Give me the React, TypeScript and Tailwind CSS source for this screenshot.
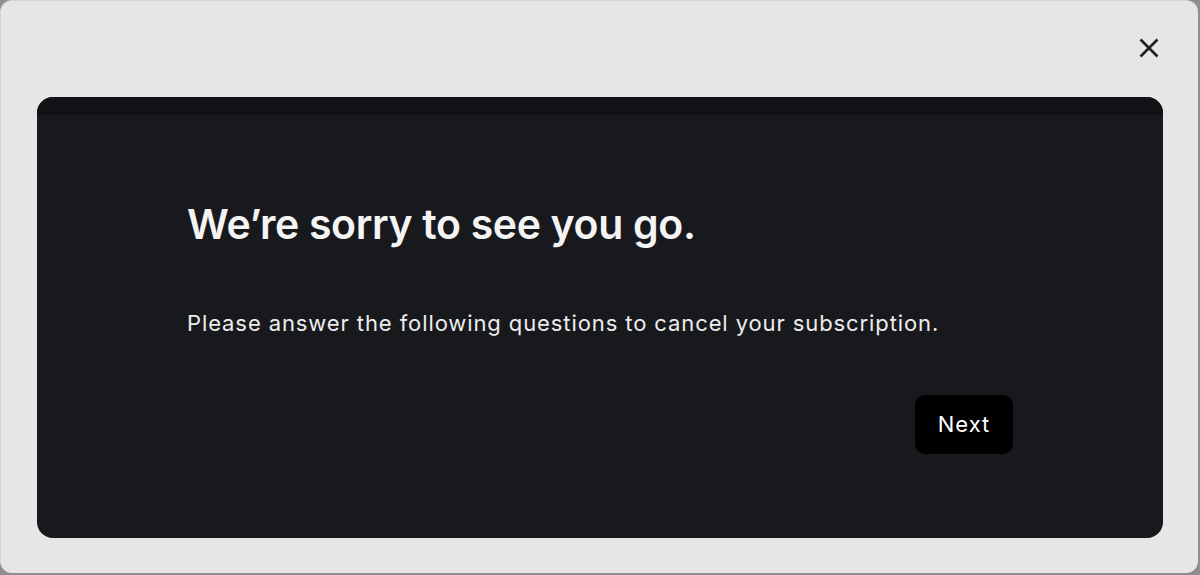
export default function App() {
  return (
    <div className="h-[575px] w-[1200px] bg-[#8e8e8e] font-['Inter',sans-serif]">
      <div className="flex h-[573px] w-[1198px] flex-col rounded-[12px] border-l border-t border-[#d4d4d4] bg-[#e6e6e6]">
        {/* Top bar with close */}
        <div className="flex h-[96px] items-start justify-end pr-[39px] pt-[37px]">
          <button className="text-[#1f1f1f]">
            <svg width="20" height="20" viewBox="0 0 20 20" fill="none" stroke="currentColor" strokeWidth="2.6" strokeLinecap="butt">
              <path d="M1.5 1.5L18.5 18.5M18.5 1.5L1.5 18.5" />
            </svg>
          </button>
        </div>

        {/* Dark panel */}
        <div className="ml-[36px] mr-[35px] flex h-[441px] flex-col overflow-hidden rounded-[16px] bg-[#18191d]">
          <div className="h-[18px] bg-[#111215]" />
          <div className="flex flex-col px-[150px] pt-[85px]">
            <h1 className="text-[41px] font-semibold leading-[48px] tracking-[-0.35px] text-[#f4f4f4]">
              We’re sorry to see you go.
            </h1>
            <p className="mt-[60px] text-[22px] leading-[30px] tracking-[0.9px] text-[#ededed]">
              Please answer the following questions to cancel your subscription.
            </p>
            <div className="mt-[57px] flex justify-end">
              <button className="h-[59px] w-[98px] rounded-[10px] bg-black text-[22px] tracking-[1px] text-white">
                Next
              </button>
            </div>
          </div>
        </div>
      </div>
    </div>
  );
}
